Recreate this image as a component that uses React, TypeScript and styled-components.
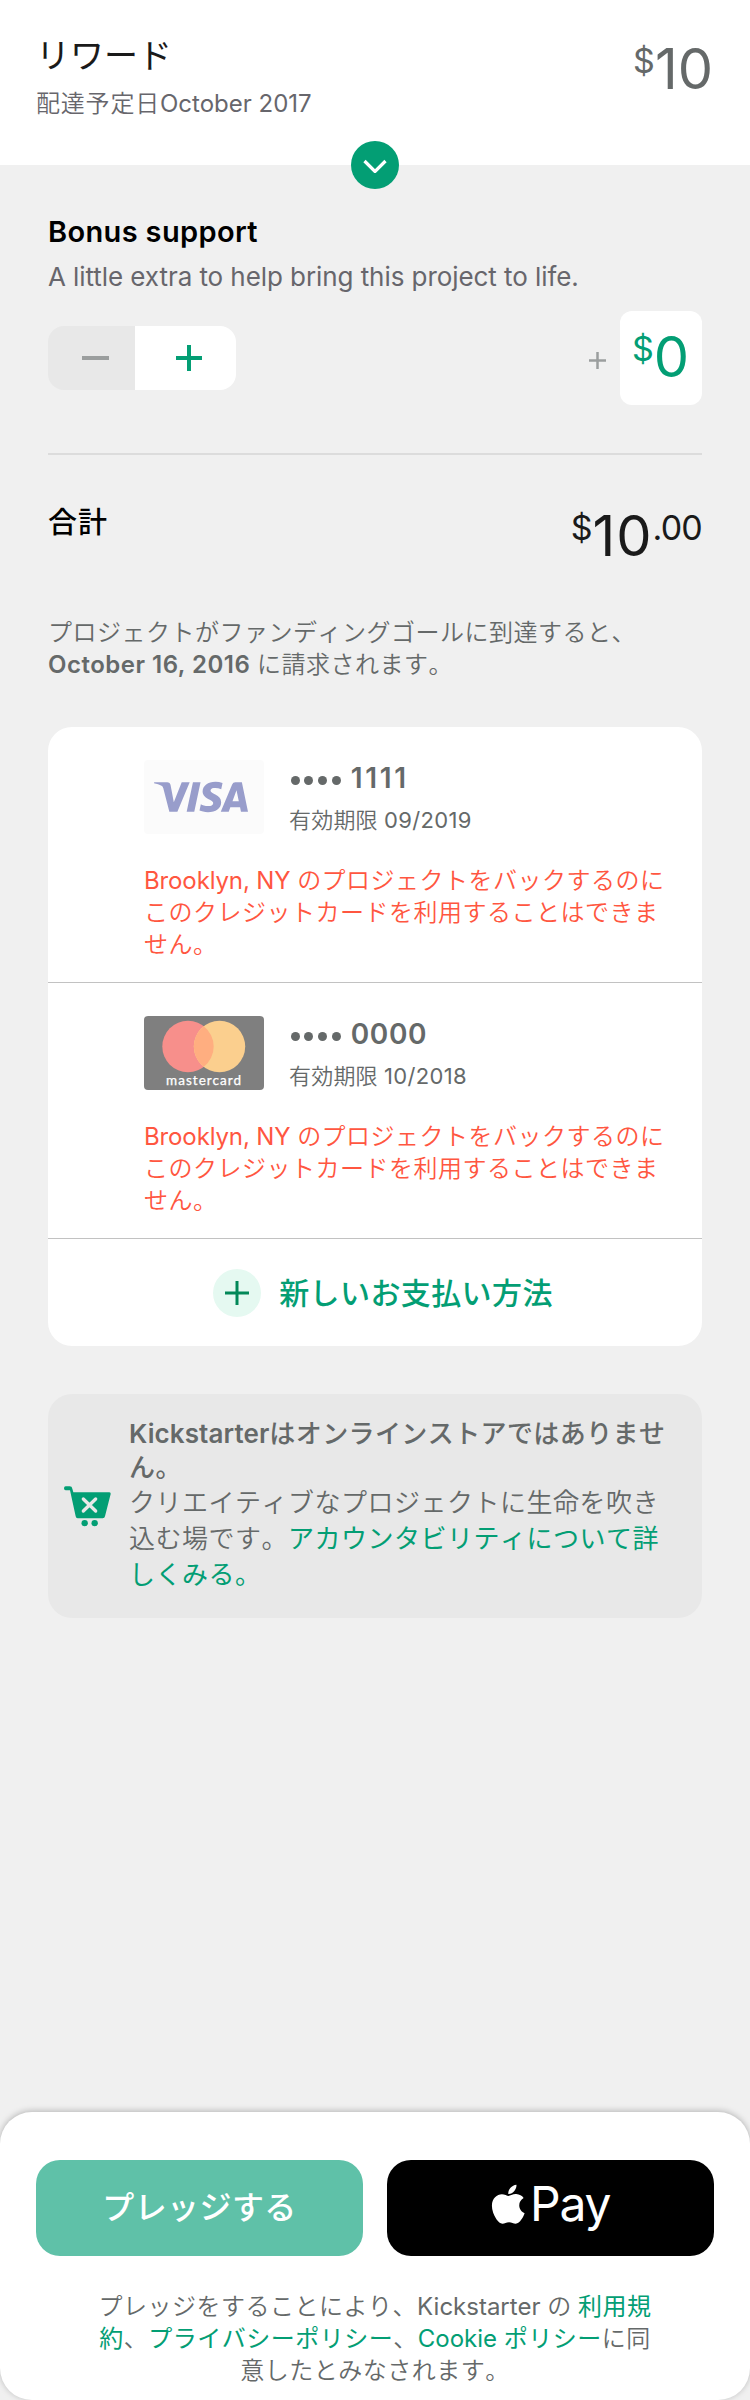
import React from 'react';
import styled, { createGlobalStyle } from 'styled-components';
import { FaApple } from 'react-icons/fa';
import { SiVisa } from 'react-icons/si';

const GREEN = '#039e74';

const Global = createGlobalStyle`
  * { box-sizing: border-box; }
  body { margin: 0; background: #f0f0f0; }
  button { border: 0; padding: 0; margin: 0; background: none; font: inherit; color: inherit; }
`;
const Page = styled.div`
  width: 750px; height: 2400px; display: flex; flex-direction: column;
  background: #f0f0f0; color: #656969; font-family: Inter, 'Noto Sans CJK JP', sans-serif;
  white-space: nowrap;
`;
const T = styled.span<{ $ls?: number; $b?: number; $c?: string }>`
  letter-spacing: ${p => p.$ls ?? 0}px;
  ${p => p.$b && `font-weight: ${p.$b};`}
  ${p => p.$c && `color: ${p.$c};`}
`;
const J = styled(T)`
  font-kerning: none;
  letter-spacing: ${p => p.$ls ?? 0.5}px;
  font-weight: ${p => p.$b ?? 350};
`;
const Header = styled.header`
  position: relative; height: 165px; padding: 35px 37px 0 36px; background: #fff;
  display: flex; justify-content: space-between; align-items: flex-start;
`;
const RewardTitle = styled.h1`margin: 0; font-size: 34px; line-height: 42px; font-weight: 400; color: #1a1a1a;`;
const Delivery = styled.p`margin: 12px 0 0; font-size: 24px; line-height: 30px; color: #67666c;`;
const Toggle = styled.button`
  position: absolute; left: 351px; top: 141px; width: 48px; height: 48px; border-radius: 50%;
  background: ${GREEN}; display: flex; align-items: center; justify-content: center;
`;
const Money = styled.div<{ $c: string; $mt?: number }>`
  display: flex; align-items: flex-start; margin-top: ${p => p.$mt ?? 0}px;
  color: ${p => p.$c}; font-size: 56px; line-height: 56px;
`;
const Small = styled.span<{ $ls?: number }>`font-size: 34px; line-height: 40px; letter-spacing: ${p => p.$ls ?? 0}px;`;
const Main = styled.main`padding: 47px 48px 0; flex: 1;`;
const H2 = styled.h2`margin: 0; font-size: 29px; line-height: 40px; font-weight: 600; color: #000;`;
const Hint = styled.p`margin: 5px 0 0; font-size: 26px; line-height: 40px; color: #67666c;`;
const BonusRow = styled.div`
  margin-top: 14px; height: 94px; display: flex; align-items: center;
  > svg { margin-top: 5px; }
`;
const Stepper = styled.div`display: flex; width: 188px; height: 64px; border-radius: 16px; overflow: hidden; margin-right: auto;`;
const Step = styled.button<{ $w: number; $bg: string }>`
  width: ${p => p.$w}px; padding-left: 7px; background: ${p => p.$bg};
  display: flex; align-items: center; justify-content: center;
`;
const BonusBox = styled.div`
  width: 82px; height: 94px; margin-left: 14px; padding: 18px 0 0 12px; border-radius: 12px; background: #fff;
`;
const Rule = styled.hr`margin: 48px 0 0; border: 0; height: 2px; background: #dcdcdc;`;
const TotalRow = styled.div`margin-top: 46px; height: 100px; display: flex; justify-content: space-between;`;
const TotalLabel = styled(H2)`margin-top: 2px;`;
const Note = styled.p`margin: 16px 0 0; font-size: 24px; line-height: 32px;`;
const Cards = styled.section`
  margin-top: 46px; height: 619px; border-radius: 24px; background: #fff; overflow: hidden;
`;
const Card = styled.article`height: 256px; padding: 33px 0 0 96px; border-bottom: 1px solid #c2c2c2;`;
const CardTop = styled.div`display: flex; gap: 25px; height: 74px;`;
const Visa = styled.div`
  width: 120px; height: 74px; padding-right: 6px; border-radius: 4px; background: #fbfbfb; color: #989dcb;
  display: flex; align-items: center; justify-content: center;
`;
const CardNumber = styled.div`font-size: 28px; line-height: 36px; font-weight: 600; display: flex; align-items: center;`;
const Dots = styled.span`
  display: flex; gap: 4.7px; margin: 4px 10px 0 1.7px;
  i { width: 9px; height: 9px; border-radius: 50%; background: #656969; }
`;
const Expiry = styled.div`margin-top: 8px; font-size: 22px; line-height: 32px;`;
const ErrorText = styled.p`margin: 31px 0 0; font-size: 24px; line-height: 32px; color: #ff5640;`;
const AddRow = styled.button`
  width: 100%; height: 107px; padding-left: 16px; display: flex; align-items: center; justify-content: center;
  font-size: 30px; line-height: 40px; color: ${GREEN}; gap: 18px;
`;
const AddIcon = styled.span`
  width: 48px; height: 48px; border-radius: 50%; background: #e5f9f1; display: flex; align-items: center; justify-content: center;
`;
const Notice = styled.aside`
  margin-top: 48px; height: 224px; border-radius: 24px; background: #e8e8e8; padding: 23px 0 0 16px;
  display: flex; gap: 18px; font-size: 26px; line-height: 36px;
  > svg { margin-top: 69px; flex: none; }
`;
const NoticeTitle = styled.div`line-height: 34px; font-weight: 600;`;
const Sheet = styled.footer`
  height: 288px; padding: 48px 36px 0; border-radius: 32px; background: #fff;
  box-shadow: 0 -1px 6px rgba(0,0,0,.25);
`;
const Buttons = styled.div`display: flex; gap: 24px;`;
const PayButton = styled.button<{ $bg: string; $pad: string }>`
  width: 327px; height: 96px; padding: ${p => p.$pad}; border-radius: 24px; background: ${p => p.$bg}; color: #fff;
  display: flex; align-items: center; justify-content: center; font-size: 32px;
`;
const PayWord = styled.span`font-size: 48px; line-height: 48px; letter-spacing: -1.2px;`;
const Legal = styled.p`margin: 35px 0 0; font-size: 24px; line-height: 32px; text-align: center;`;

const Plus = ({ s, w, c }: { s: number; w: number; c: string }) => (
  <svg width={s} height={s}><path d={`M0 ${s / 2}H${s}M${s / 2} 0V${s}`} stroke={c} strokeWidth={w} /></svg>
);
const Mastercard = () => (
  <svg width="120" height="74">
    <rect width="120" height="74" rx="4" fill="#7f7f7f" />
    <circle cx="44" cy="30.5" r="25.7" fill="#f78f8b" />
    <circle cx="75.5" cy="30.5" r="25.7" fill="#fbcf8e" />
    <path d="M59.75 10.2a25.7 25.7 0 0 1 0 40.6a25.7 25.7 0 0 1 0-40.6z" fill="#ffae80" />
    <text x="22" y="69.3" fontFamily="Lato" fontSize="13.5" fill="#fff" stroke="#fff" strokeWidth=".25" textLength="75">mastercard</text>
  </svg>
);
const Cart = () => (
  <svg width="47" height="41" viewBox="43 47 141 123">
    <path d="M48 48H60Q67 48 68 55L71 66H179Q184 66 183 71L166 138Q165 144 159 144H84Q79 144 78 138L61 60H48Q43 60 43 54T48 48Z" fill={GREEN} />
    <path d="M101 86L138 122M138 86L101 122" stroke="#e8e8e8" strokeWidth="10" strokeLinecap="round" />
    <circle cx="105" cy="158.5" r="9.5" fill={GREEN} />
    <circle cx="135" cy="158.5" r="9.5" fill={GREEN} />
  </svg>
);

type SavedCardProps = { art: React.ReactNode; last4: string; spacing?: number; expires: string };
const SavedCard = ({ art, last4, spacing, expires }: SavedCardProps) => (
  <Card>
    <CardTop>
      {art}
      <div>
        <CardNumber><Dots><i /><i /><i /><i /></Dots><T $ls={spacing}>{last4}</T></CardNumber>
        <Expiry><J $ls={0.2}>有効期限</J> <T $ls={0.35}>{expires}</T></Expiry>
      </div>
    </CardTop>
    <ErrorText>
      <T $ls={-0.12}>Brooklyn, NY </T><J>のプロジェクトをバックするのに</J><br />
      <J>このクレジットカードを利用することはできま</J><br />
      <J>せん。</J>
    </ErrorText>
  </Card>
);

export default function App() {
  return (
    <Page>
      <Global />
      <Header>
        <div>
          <RewardTitle>リワード</RewardTitle>
          <Delivery><J $ls={0.8}>配達予定日</J>October 2017</Delivery>
        </div>
        <Money $c="#656969" $mt={6}><Small>$</Small>10</Money>
        <Toggle aria-label="展開">
          <svg width="24" height="16"><path d="M1.5 3L12 13.5L22.5 3" transform="translate(0 1)" fill="none" stroke="#fff" strokeWidth="3.2" /></svg>
        </Toggle>
      </Header>
      <Main>
        <H2><T $ls={0.35}>Bonus support</T></H2>
        <Hint><T $ls={-0.07}>A little extra to help bring this project to life.</T></Hint>
        <BonusRow>
          <Stepper>
            <Step $w={87} $bg="#e8e8e8"><svg width="27" height="4"><rect width="27" height="4" fill="#9b9e9e" /></svg></Step>
            <Step $w={101} $bg="#fff"><Plus s={26} w={4} c={GREEN} /></Step>
          </Stepper>
          <Plus s={17} w={2.5} c="#9b9e9e" />
          <BonusBox><Money $c={GREEN}><Small>$</Small>0</Money></BonusBox>
        </BonusRow>
        <Rule />
        <TotalRow>
          <TotalLabel><J $ls={1} $b={500}>合計</J></TotalLabel>
          <Money $c="#1a1a1a" $mt={7}><Small>$</Small><T $ls={1}>10</T><Small $ls={-0.8}>.00</Small></Money>
        </TotalRow>
        <Note>
          <J>プロジェクトがファンディングゴールに到達すると、</J><br />
          <T $b={600} $ls={0.5}>October 16, 2016</T> <J>に請求されます。</J>
        </Note>
        <Cards>
          <SavedCard art={<Visa><SiVisa size={94} /></Visa>} last4="1111" spacing={2.7} expires="09/2019" />
          <SavedCard art={<Mastercard />} last4="0000" spacing={0.6} expires="10/2018" />
          <AddRow><AddIcon><Plus s={24} w={3} c="#028858" /></AddIcon><J $b={500} $ls={0.4}>新しいお支払い方法</J></AddRow>
        </Cards>
        <Notice>
          <Cart />
          <div>
            <NoticeTitle><T $ls={0.1}>Kickstarter</T><J $b={500} $ls={0.4}>はオンラインストアではありませ</J><br /><J $b={500}>ん。</J></NoticeTitle>
            <J>クリエイティブなプロジェクトに生命を吹き</J><br />
            <J>込む場です。</J><J $b={400} $c={GREEN}>アカウンタビリティについて詳</J><br />
            <J $b={400} $c={GREEN}>しくみる。</J>
          </div>
        </Notice>
      </Main>
      <Sheet>
        <Buttons>
          <PayButton $bg="#5fc1a8" $pad="0 0 6px"><J $b={500} $ls={0.4}>プレッジする</J></PayButton>
          <PayButton $bg="#000" $pad="0 5px 8px 0"><FaApple size={44.5} /><PayWord>Pay</PayWord></PayButton>
        </Buttons>
        <Legal>
          <J>プレッジをすることにより、</J>Kickstarter <J $ls={0}>の </J><J $b={400} $c={GREEN}>利用規</J><br />
          <J $b={400} $c={GREEN}>約</J><J>、</J><J $b={400} $c={GREEN}>プライバシーポリシー</J><J>、</J><T $c={GREEN}>Cookie </T><J $b={400} $c={GREEN}>ポリシー</J><J>に同</J><br />
          <J>意したとみなされます。</J>
        </Legal>
      </Sheet>
    </Page>
  );
}
